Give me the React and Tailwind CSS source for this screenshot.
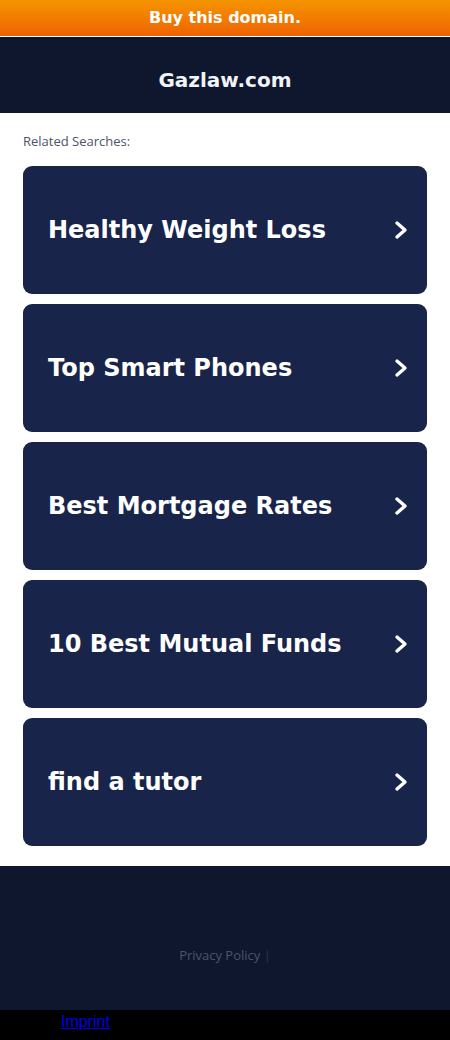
import React from "react";

const items = [
  "Healthy Weight Loss",
  "Top Smart Phones",
  "Best Mortgage Rates",
  "10 Best Mutual Funds",
  "find a tutor",
];

function Chevron() {
  return (
    <svg width="18" height="20" viewBox="0 0 18 20" fill="none">
      <path d="M5 3 L13 10 L5 17" stroke="white" strokeWidth="3.4" strokeLinecap="round" strokeLinejoin="round" />
    </svg>
  );
}

export default function App() {
  return (
    <div className="w-[450px] min-h-[1040px] bg-white" style={{ fontFamily: '"DejaVu Sans", sans-serif' }}>
      <div className="h-[36px] flex items-center justify-center bg-gradient-to-b from-[#f59400] to-[#ee6202] text-white font-bold text-[16px] border-b border-white box-content">
        Buy this domain.
      </div>
      <div className="h-[76px] bg-[#0f172e] flex items-center justify-center pt-[10px] text-[#f1f3f7] font-bold text-[20px]">
        Gazlaw.com
      </div>
      <div className="px-[23px] pt-[20px] pb-[20px]">
        <div className="text-[13px] text-[#4b5468] h-[16px] leading-[16px] mb-[17px]" style={{ fontFamily: '"Open Sans", sans-serif' }}>
          Related Searches:
        </div>
        <div className="flex flex-col gap-[10px]">
          {items.map((t) => (
            <div key={t} className="h-[128px] rounded-[9px] bg-[#19244b] flex items-center justify-between pl-[25px] pr-[17px]">
              <span className="text-white font-bold text-[24px]">{t}</span>
              <Chevron />
            </div>
          ))}
        </div>
      </div>
      <div className="h-[144px] bg-[#0f172e] flex items-center justify-center pt-[36px]">
        <span className="text-[13px] text-[#4b5468]" style={{ fontFamily: '"Open Sans", sans-serif' }}>
          Privacy Policy <span className="text-[#2c3448]">|</span>
        </span>
      </div>
      <div className="h-[30px] bg-black pl-[61px] flex items-start">
        <a href="#" className="text-[#0000ee] underline text-[16px] leading-[24px]" style={{ fontFamily: '"Liberation Sans", sans-serif' }}>
          Imprint
        </a>
      </div>
    </div>
  );
}
